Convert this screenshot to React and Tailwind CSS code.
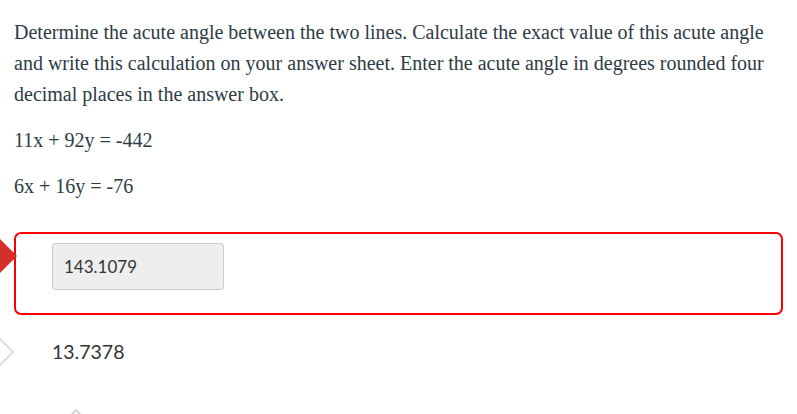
export default function App() {
  return (
    <div className="h-[414px] w-[797px] overflow-hidden bg-white text-[#2d3b45]">
      <div className="px-[14px] pt-[17px]">
        <p className="font-['Liberation_Serif',serif] text-[20px] leading-[31px]">
          Determine the acute angle between the two lines. Calculate the exact value of this acute angle and write this
          calculation on your answer sheet. Enter the acute angle in degrees rounded four decimal places in the answer box.
        </p>
        <p className="mt-[17px] font-['Liberation_Serif',serif] text-[20px] leading-[26px]">11x + 92y = -442</p>
        <p className="mt-[20px] font-['Liberation_Serif',serif] text-[20px] leading-[26px]">6x + 16y = -76</p>
      </div>

      <div className="relative mt-[33px]">
        <div className="absolute left-[-12px] top-[12px] h-[24px] w-[24px] rotate-45 bg-[#d2312a]" />
        <div className="mx-[14px] h-[83px] rounded-[7px] border-2 border-[#ff0000] pl-[36px] pt-[9px] pr-[20px]">
          <div className="flex h-[47px] w-[172px] items-center rounded-[3px] border border-[#cccccc] bg-[#eeeeee] px-[11px] font-['Lato',sans-serif] text-[17px] text-[#333]">
            143.1079
          </div>
        </div>
      </div>

      <div className="relative mt-[18px] h-[40px]">
        <div className="absolute left-[-12px] top-[8px] h-[22px] w-[22px] rotate-45 border-2 border-[#dddddd] bg-white" />
        <div className="pl-[52px] pt-[4px] font-['Lato',sans-serif] text-[19.5px] text-[#333]">13.7378</div>
      </div>

      <div className="relative mt-[35px] flex justify-start pl-[70px]">
        <svg width="12" height="8" viewBox="0 0 12 8" className="text-[#c7cdd1]">
          <path d="M1 7 L6 2 L11 7" fill="none" stroke="currentColor" strokeWidth="1.5" />
        </svg>
      </div>
    </div>
  )
}
